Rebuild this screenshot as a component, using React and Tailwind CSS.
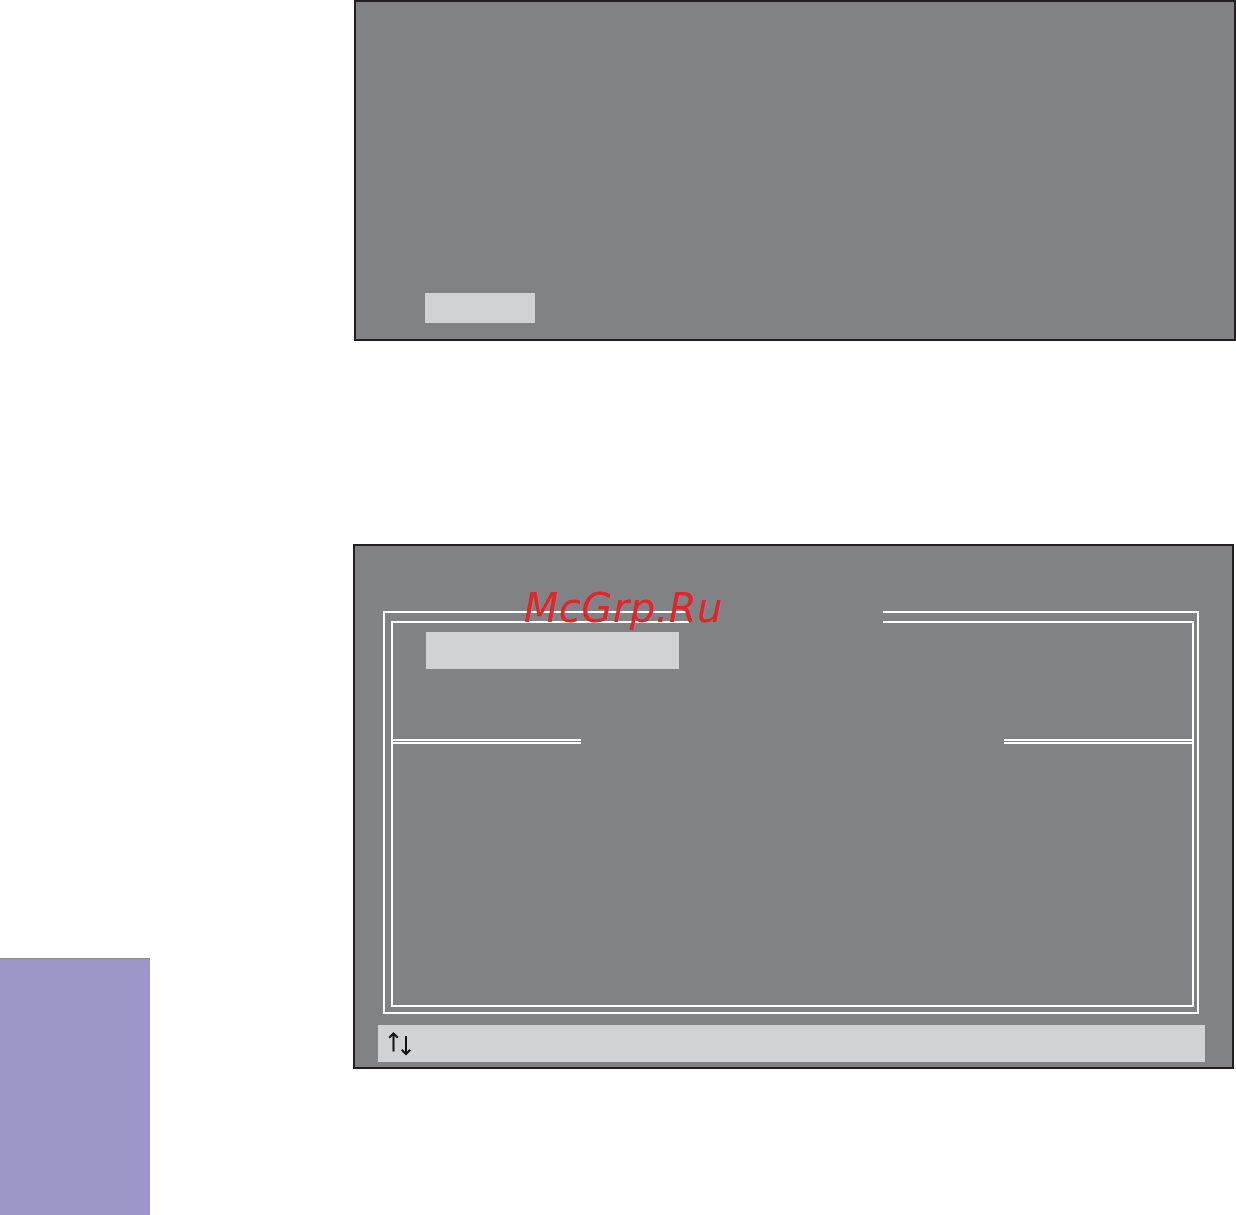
const panel = "bg-[#818286] border-2 border-[#231f20]"

const DoubleRule = ({ className }) => (
  <div className={`h-[5px] border-y-2 border-white ${className}`} />
)

// up/down navigation hint
const UpDownArrows = () => (
  <svg width="26" height="24" viewBox="0 0 26 24" fill="none" stroke="#111" strokeWidth="2">
    <path d="M6.5 1.5V19.5M2.2 5.8L6.5 1.5L10.8 5.8" />
    <path d="M19 4V22M14.7 17.7L19 22L23.3 17.7" />
  </svg>
)

export default function App() {
  return (
    <div className="relative w-[1236px] h-[1215px] bg-white overflow-hidden" style={{ fontFamily: '"DejaVu Sans", sans-serif' }}>
      {/* upper screen */}
      <div className={`ml-[354px] w-[882px] h-[341px] ${panel}`}>
        <div className="ml-[69px] mt-[291px] w-[110px] h-[30px] bg-[#d1d2d4]" />
      </div>

      <div className="flex h-[874px]">
        <div className="w-[353px] flex flex-col justify-end">
          <div className="w-[150px] h-[257px] bg-[#9c96c9] border-t border-[#8c8c8c]" />
        </div>

        {/* lower screen */}
        <div className="mt-[203px]">
          <div className={`w-[881px] h-[525px] ${panel}`}>
            <div className="relative ml-[28px] mt-[65px] w-[816px] h-[403px] border-2 border-white pl-[6px] pt-[8px] pr-[3px] pb-[5px]">
              <div className="absolute left-[304px] -top-[3px] w-[194px] h-[16px] bg-[#818286]" />
              <div className="h-full border-2 border-white">
                <div className="ml-[33px] mt-[9px] w-[253px] h-[37px] bg-[#d1d2d4]" />
                <div className="flex mt-[70px] -ml-[1px]">
                  <DoubleRule className="w-[189px]" />
                  <div className="flex-1" />
                  <DoubleRule className="w-[188px]" />
                </div>
              </div>
            </div>
            <div className="ml-[23px] mt-[11px] w-[827px] h-[37px] bg-[#d1d2d4] pl-[9px] pt-[7px]">
              <UpDownArrows />
            </div>
          </div>
        </div>
      </div>

      <span className="absolute left-[524px] top-[588px] text-[40px] leading-[40px] italic text-[#e2242b] tracking-[0.5px]">
        McGrp.Ru
      </span>
    </div>
  )
}
